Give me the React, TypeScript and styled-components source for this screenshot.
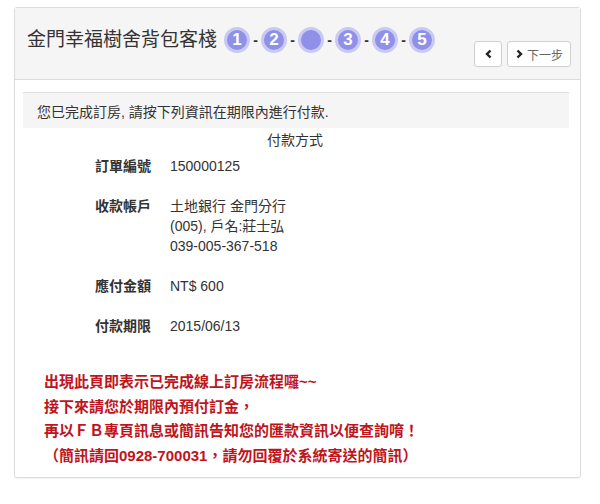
import React from "react";
import styled, { createGlobalStyle } from "styled-components";

const GlobalStyle = createGlobalStyle`
  body {
    margin: 0;
    background: #fff;
    font-family: "Liberation Sans", "Noto Sans CJK TC", sans-serif;
    color: #333;
  }
`;

const Page = styled.div`
  width: 600px;
  height: 504px;
  padding: 7px 0 0 14px;
  box-sizing: border-box;
`;

const Panel = styled.div`
  width: 567px;
  height: 471px;
  box-sizing: border-box;
  border: 1px solid #dcdcdc;
  border-radius: 3px;
  box-shadow: 0 1px 1px rgba(0, 0, 0, 0.05);
  display: flex;
  flex-direction: column;
`;

const Header = styled.div`
  height: 72px;
  box-sizing: border-box;
  background: #f5f5f5;
  border-bottom: 1px solid #dcdcdc;
  display: flex;
  align-items: flex-start;
  justify-content: space-between;
  padding: 19px 9px 0 12px;
`;

const TitleRow = styled.div`
  display: flex;
  align-items: center;
  height: 26px;
`;

const Title = styled.h3`
  margin: 0 7px 0 0;
  font-size: 19px;
  font-weight: 400;
  line-height: 26px;
  color: #333;
`;

const Steps = styled.div`
  display: flex;
  align-items: center;
`;

const Step = styled.span`
  width: 26px;
  height: 26px;
  box-sizing: border-box;
  border-radius: 50%;
  background: #8f90e8;
  border: 3px solid #c9c9f3;
  color: #fff;
  font-family: "Liberation Sans", sans-serif;
  font-weight: 700;
  font-size: 17px;
  display: flex;
  align-items: center;
  justify-content: center;
`;

const Dash = styled.span`
  width: 11px;
  text-align: center;
  font-size: 14px;
  font-weight: 700;
  color: #333;
  line-height: 26px;
`;

const BtnGroup = styled.div`
  display: flex;
  gap: 5px;
  margin-top: 14px;
`;

const Btn = styled.button<{ $w: number }>`
  width: ${(p) => p.$w}px;
  height: 26px;
  box-sizing: border-box;
  background: #fff;
  border: 1px solid #cfcfcf;
  border-radius: 3px;
  display: flex;
  align-items: center;
  justify-content: center;
  gap: 3px;
  padding: 0;
  font-family: "Liberation Sans", "Noto Sans CJK TC", sans-serif;
  font-size: 12px;
  color: #666;
`;

const Body = styled.div`
  padding: 12px 11px 0 8px;
  flex: 1;
`;

const Alert = styled.div`
  height: 36px;
  box-sizing: border-box;
  background: #f5f5f5;
  border-top: 1px solid #dedede;
  padding: 0 14px;
  display: flex;
  align-items: center;
  font-size: 14px;
  color: #333;
`;

const Caption = styled.div`
  margin-top: 2px;
  text-align: center;
  line-height: 20px;
  font-size: 14px;
  padding-right: 2px;
`;

const Table = styled.div`
  margin: 6px 0 0 72px;
  display: grid;
  grid-template-columns: 58px 1fr;
  column-gap: 17px;
  row-gap: 20px;
  font-size: 14px;
  line-height: 20px;
`;

const Label = styled.div`
  font-weight: 700;
  color: #333;
`;

const Value = styled.div`
  color: #333;
`;

const Notice = styled.div`
  margin: 34px 0 0 21px;
  color: #c0141c;
  font-weight: 700;
  font-size: 15px;
  line-height: 24.5px;
`;

const Chevron = ({ dir }: { dir: "left" | "right" }) => (
  <svg width="9" height="10" viewBox="0 0 9 10">
    <path
      d={dir === "left" ? "M6.5 1.5 L3 5 L6.5 8.5" : "M2.5 1.5 L6 5 L2.5 8.5"}
      fill="none"
      stroke="#222"
      strokeWidth="2.4"
    />
  </svg>
);

const steps = ["1", "2", "", "3", "4", "5"];

const rows: { label: string; value: React.ReactNode }[] = [
  { label: "訂單編號", value: "150000125" },
  {
    label: "收款帳戶",
    value: (
      <>
        土地銀行 金門分行
        <br />
        (005), 戶名:莊士弘
        <br />
        039-005-367-518
      </>
    ),
  },
  { label: "應付金額", value: "NT$ 600" },
  { label: "付款期限", value: "2015/06/13" },
];

export default function App() {
  return (
    <Page>
      <GlobalStyle />
      <Panel>
        <Header>
          <TitleRow>
            <Title>金門幸福樹舍背包客棧</Title>
            <Steps>
              {steps.map((s, i) => (
                <React.Fragment key={i}>
                  {i > 0 && <Dash>-</Dash>}
                  <Step>{s}</Step>
                </React.Fragment>
              ))}
            </Steps>
          </TitleRow>
          <BtnGroup>
            <Btn $w={28}>
              <Chevron dir="left" />
            </Btn>
            <Btn $w={64}>
              <Chevron dir="right" />
              下一步
            </Btn>
          </BtnGroup>
        </Header>
        <Body>
          <Alert>您巳完成訂房, 請按下列資訊在期限內進行付款.</Alert>
          <Caption>付款方式</Caption>
          <Table>
            {rows.map((r) => (
              <React.Fragment key={r.label}>
                <Label>{r.label}</Label>
                <Value>{r.value}</Value>
              </React.Fragment>
            ))}
          </Table>
          <Notice>
            出現此頁即表示已完成線上訂房流程囉~~
            <br />
            接下來請您於期限內預付訂金，
            <br />
            再以ＦＢ專頁訊息或簡訊告知您的匯款資訊以便查詢唷！
            <br />
            （簡訊請回0928-700031，請勿回覆於系統寄送的簡訊）
          </Notice>
        </Body>
      </Panel>
    </Page>
  );
}
